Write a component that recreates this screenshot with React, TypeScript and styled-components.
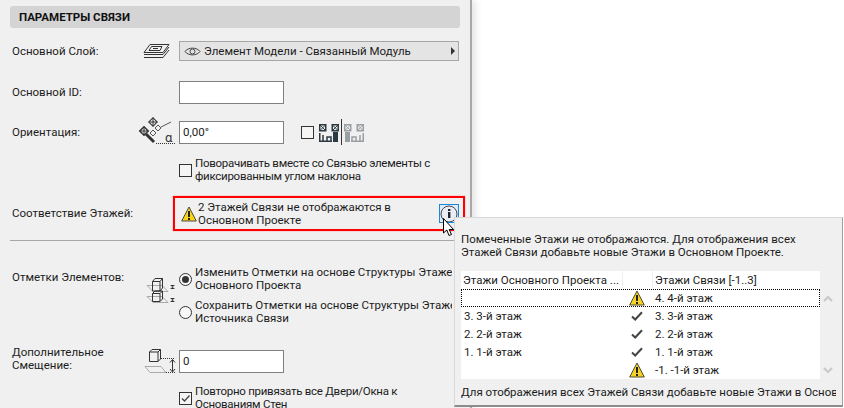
import React, { FC } from 'react';
import styled, { createGlobalStyle } from 'styled-components';

const GlobalStyle = createGlobalStyle`
    html, body {
        margin: 0;
        padding: 0;
        background: #fff;
        overflow: hidden;
    }
    body {
        font-family: Roboto, "Open Sans", sans-serif;
        font-size: 11.5px;
        line-height: 13px;
        color: #1c1c1c;
    }
`;

const Page = styled.div`
    position: relative;
    width: 844px;
    height: 408px;
    overflow: hidden;
    background: #fff;
`;

const SettingsPanel = styled.section`
    width: 470px;
    height: 408px;
    box-sizing: border-box;
    padding-top: 6px;
    background: #f0f0f0;
    box-shadow: 2px 0 0 #a8a8a8, 5px 0 8px rgba(0, 0, 0, 0.12);
    overflow: hidden;
`;

const SectionHeader = styled.h2`
    display: flex;
    align-items: center;
    width: 450px;
    height: 22px;
    margin: 0 0 0 10px;
    padding-left: 9px;
    box-sizing: border-box;
    background: #d4d4d4;
    border-radius: 3px;
    font-size: 11.5px;
    font-weight: 700;
    color: #111;
`;

const Row = styled.div<{ $top: number; $align?: string }>`
    display: grid;
    grid-template-columns: 125px 42px 1fr;
    align-items: ${(p) => p.$align || 'center'};
    margin-top: ${(p) => p.$top}px;
    padding-left: 12px;
`;

const Label = styled.div<{ $offset?: number }>`
    margin-top: ${(p) => p.$offset || 0}px;
    white-space: nowrap;
`;

const Icon = styled.svg`
    display: block;
    overflow: visible;
`;

const Dropdown = styled.div`
    display: flex;
    align-items: center;
    width: 280px;
    height: 20px;
    padding: 0 3px 0 4px;
    box-sizing: border-box;
    background: #e4e4e4;
    border: 1px solid #a6a6a6;
    gap: 3px;
`;

const DropdownArrow = styled.span`
    margin-left: auto;
    border-left: 4px solid #333;
    border-top: 4px solid transparent;
    border-bottom: 4px solid transparent;
`;

const TextField = styled.div<{ $top?: number }>`
    display: flex;
    align-items: center;
    width: 105px;
    height: 23px;
    margin-top: ${(p) => p.$top || 0}px;
    padding-left: 3px;
    box-sizing: border-box;
    background: #fff;
    border: 1px solid #808080;
`;

const InlineGroup = styled.div`
    display: flex;
    align-items: center;
`;

const Box = styled.span<{ $gap?: number }>`
    flex: none;
    display: block;
    width: 13px;
    height: 13px;
    box-sizing: border-box;
    margin-right: ${(p) => p.$gap ?? 3}px;
    background: #f5f5f5;
    border: 1px solid #333;
`;

const CheckRow = styled.div<{ $top: number; $after?: number }>`
    display: flex;
    align-items: center;
    width: 280px;
    margin: ${(p) => p.$top}px 0 ${(p) => p.$after || 0}px 179px;
    letter-spacing: -0.27px;
`;

const AlertBox = styled.div`
    display: flex;
    align-items: center;
    width: 292px;
    height: 35px;
    margin-left: -6px;
    padding: 0 4px 0 6px;
    box-sizing: border-box;
    border: 2px solid #f00;
    box-shadow: 0 0 1px #f66;
`;

const AlertText = styled.div`
    margin-left: 1px;
`;

const InfoButton = styled.div`
    position: relative;
    margin-left: auto;
    width: 20px;
    height: 19px;
    box-sizing: border-box;
    border: 1px solid #1e88d8;
    background: #dcebf7;
`;

const Divider = styled.hr`
    width: 450px;
    height: 1px;
    margin: 9px 0 0 10px;
    border: 0;
    background: #a8a8a8;
`;

const RadioList = styled.div`
    display: flex;
    flex-direction: column;
    gap: 7px;
    white-space: nowrap;
    width: 273px;
    overflow: hidden;
`;

const RadioRow = styled.div`
    display: flex;
    align-items: center;
`;

const Radio = styled.span<{ $on?: boolean }>`
    flex: none;
    display: flex;
    align-items: center;
    justify-content: center;
    width: 13px;
    height: 13px;
    margin-right: 3px;
    box-sizing: border-box;
    border: 1px solid #333;
    border-radius: 50%;
    background: #f8f8f8;

    &::after {
        content: '';
        display: ${(p) => (p.$on ? 'block' : 'none')};
        width: 7px;
        height: 7px;
        border-radius: 50%;
        background: #333;
    }
`;

const Popup = styled.aside`
    position: absolute;
    left: 454px;
    top: 217px;
    width: 389px;
    height: 190px;
    padding: 15px 0 0 6px;
    box-sizing: border-box;
    background: #f0f0f0;
    border: 1px solid #d8d8d8;
    border-right-color: #a0a0a0;
    border-bottom: 2px solid #8c8c8c;
`;

const TableArea = styled.div`
    display: flex;
    margin-top: 12px;
`;

const Table = styled.div`
    width: 359px;
    background: #fff;
`;

const TableRow = styled.div<{ $focus?: boolean }>`
    display: grid;
    grid-template-columns: 161px 30px 1fr;
    align-items: center;
    height: 18px;
    box-sizing: border-box;
    outline: ${(p) => (p.$focus ? '1px dotted #000' : 'none')};
    outline-offset: -1px;
`;

const HeadCell = styled.div<{ $line?: boolean }>`
    height: 18px;
    line-height: 18px;
    padding-left: 2px;
    border-left: ${(p) => (p.$line ? '1px solid #f0f0f0' : '0')};
    box-sizing: border-box;
    white-space: nowrap;
`;

const Cell = styled.div`
    padding-left: 3px;
`;

const MarkCell = styled.div`
    display: flex;
    justify-content: center;
`;

const ScrollColumn = styled.div`
    display: flex;
    flex-direction: column;
    justify-content: space-between;
    align-items: center;
    width: 15px;
    padding: 24px 0 5px;
    box-sizing: border-box;
`;

const PopupFooter = styled.div`
    width: 375px;
    margin-top: 7px;
    overflow: hidden;
    white-space: nowrap;
`;

const Cursor = styled.svg`
    position: absolute;
    left: 443px;
    top: 218px;
`;

const WarningIcon: FC = () => (
    <Icon width="16" height="16" viewBox="0 0 16 16">
        <path d="M8 1 L15.3 15 H0.7 Z" fill="#f7d21e" stroke="#4a4a3a" strokeWidth="1" strokeLinejoin="round" />
        <rect x="7" y="5" width="2" height="6" fill="#222" />
        <rect x="7" y="12" width="2" height="2" fill="#222" />
    </Icon>
);

const CheckIcon: FC = () => (
    <Icon width="12" height="10" viewBox="0 0 12 10">
        <path d="M1 5.5 L4.2 8.5 L11 1.2" fill="none" stroke="#444" strokeWidth="2" />
    </Icon>
);

const Chevron: FC<{ $down?: boolean }> = ({ $down }) => (
    <svg width="10" height="7" viewBox="0 0 10 7">
        <path d={$down ? 'M1 1 L5 5 L9 1' : 'M1 6 L5 2 L9 6'} fill="none" stroke="#c8c8c8" strokeWidth="2" />
    </svg>
);

const EyeIcon: FC = () => (
    <Icon width="17" height="11" viewBox="0 0 17 11">
        <path d="M1 5.5 C4 1 13 1 16 5.5 C13 10 4 10 1 5.5 Z" fill="none" stroke="#444" strokeWidth="1" />
        <circle cx="8.5" cy="5.5" r="2.5" fill="none" stroke="#444" strokeWidth="1" />
    </Icon>
);

const LayerIcon: FC = () => (
    <Icon width="42" height="20" viewBox="137 41 42 20">
        <g fill="none" stroke="#333" strokeWidth="1">
            <path d="M150 44.5 H169 L163 52.5 H144 Z" />
            <path d="M151.5 46.5 H162 L160 50.5 H149 Z" />
            <path d="M153 48.5 H158" />
            <path d="M144 54.5 H163 L169 47" />
            <path d="M144 57.5 H163 L169 50" />
        </g>
    </Icon>
);

const XBox: FC<{ x: number; y: number; c: string; size?: number; w?: number }> = ({ x, y, c, size = 6, w = 1 }) => (
    <g fill="none" stroke={c} strokeWidth={w}>
        <rect x={x} y={y} width={size} height={size} />
        <path d={`M${x} ${y} L${x + size} ${y + size} M${x + size} ${y} L${x} ${y + size}`} strokeWidth="1" />
    </g>
);

const OrientationIcon: FC = () => (
    <Icon width="42" height="23" viewBox="137 121 42 23">
        <g transform="rotate(45 153 122)">
            <XBox x={150} y={119} c="#333" />
        </g>
        <g transform="rotate(45 144 131)">
            <XBox x={141} y={128} c="#333" w={1.5} />
        </g>
        <path d="M146 134 L154 142" stroke="#333" strokeWidth="3" />
        <g fill="none" stroke="#555" strokeWidth="1">
            <path d="M150 133 L153 130 L156 133 L153 136 Z" />
            <path d="M155 128 L158 125 L161 128 L158 131 Z" />
            <path d="M161 127 L171 122" />
            <path d="M156 143.5 H175" strokeDasharray="1 1" stroke="#333" />
        </g>
        <text x="165" y="142" fontSize="13" fill="#333">α</text>
    </Icon>
);

const PlacementIcon: FC<{ c: string; flip?: boolean }> = ({ c, flip }) => (
    <svg width="20" height="18" viewBox="0 0 20 18">
        <g transform={flip ? 'translate(20 0) scale(-1 1)' : undefined}>
            <XBox x={0.75} y={0.75} c={c} w={1.5} />
            <XBox x={13.25} y={0.75} c={c} w={1.5} />
            <path d="M0.75 9 V17.25 H13 M4 17.25 V11 M8 17.25 V13 H12 V17.25" fill="none" stroke={c} strokeWidth="1.5" />
            <rect x="14" y="8" width="5" height="10" fill={c} />
        </g>
    </svg>
);

const PlacementSeparator = styled.span`
    width: 1px;
    height: 26px;
    margin: -2px 2px -1px;
    background: #333;
`;

const PlacementCheck = styled(Box)`
    margin: 0 5px 0 17px;
`;

const ElevationIcon: FC = () => (
    <Icon width="42" height="59" viewBox="137 266 42 59">
        <g fill="none" stroke="#aaa" strokeWidth="1">
            <path d="M152 285.5 H162 L168 291.5 H153 L147 285.5 Z" />
            <path d="M152 296.5 H162 L168 302.5 H153 L147 296.5 Z" />
        </g>
        <g fill="none" stroke="#333" strokeWidth="1">
            <path d="M152.5 281.5 L155 278.5 H162.5 V288 L160 291 H152.5 Z M152.5 281.5 H160 V291 M160 281.5 L162.5 278.5" />
            <path d="M152.5 293.5 L155 291 H162.5 V299 L160 301.5 H152.5 Z M152.5 293.5 H160 V301.5 M160 293.5 L162.5 291" />
        </g>
        <path d="M170 285 H175 L172.5 287 L175 289 H170 L172.5 287 Z" fill="#333" />
        <path d="M170 298 H175 L172.5 300 L175 302 H170 L172.5 300 Z" fill="#333" />
    </Icon>
);

const OffsetIcon: FC = () => (
    <Icon width="42" height="27" viewBox="137 346 42 27">
        <path d="M150 366.5 H161 L166 372.5 H150 L145 366.5 Z" fill="none" stroke="#aaa" strokeWidth="1" />
        <path d="M149.5 352 L152 349.5 H160.5 V359 L158 361.5 H149.5 Z M149.5 352 H158 V361.5 M158 352 L160.5 349.5" fill="none" stroke="#333" strokeWidth="1" />
        <path d="M161 358.5 H175" stroke="#333" strokeDasharray="1 1" />
        <path d="M166 372.5 H175" stroke="#333" strokeDasharray="1 1" />
        <path d="M172.5 360 V371 M170 362.5 L172.5 359.5 L175 362.5 M170 369 L172.5 372 L175 369" fill="none" stroke="#333" strokeWidth="1" />
    </Icon>
);

const storeys = [
    { id: 4, base: '', link: '4. 4-й этаж', ok: false, focus: true },
    { id: 3, base: '3. 3-й этаж', link: '3. 3-й этаж', ok: true, focus: false },
    { id: 2, base: '2. 2-й этаж', link: '2. 2-й этаж', ok: true, focus: false },
    { id: 1, base: '1. 1-й этаж', link: '1. 1-й этаж', ok: true, focus: false },
    { id: -1, base: '', link: '-1. -1-й этаж', ok: false, focus: false },
];

export default function App() {
    return (
        <Page>
            <GlobalStyle />
            <SettingsPanel>
                <SectionHeader>ПАРАМЕТРЫ СВЯЗИ</SectionHeader>
                <Row $top={13}>
                    <Label>Основной Слой:</Label>
                    <LayerIcon />
                    <Dropdown>
                        <EyeIcon />
                        Элемент Модели - Связанный Модуль
                        <DropdownArrow />
                    </Dropdown>
                </Row>
                <Row $top={20}>
                    <Label>Основной ID:</Label>
                    <span />
                    <TextField />
                </Row>
                <Row $top={17}>
                    <Label>Ориентация:</Label>
                    <OrientationIcon />
                    <InlineGroup>
                        <TextField>0,00°</TextField>
                        <PlacementCheck />
                        <PlacementIcon c="#2b3a42" />
                        <PlacementSeparator />
                        <PlacementIcon c="#9a9fa3" flip />
                    </InlineGroup>
                </Row>
                <CheckRow $top={13}>
                    <Box />
                    <div>
                        Поворачивать вместе со Связью элементы с
                        <br />
                        фиксированным углом наклона
                    </div>
                </CheckRow>
                <Row $top={13}>
                    <Label>Соответствие Этажей:</Label>
                    <span />
                    <AlertBox>
                        <WarningIcon />
                        <AlertText>
                            2 Этажей Связи не отображаются в
                            <br />
                            Основном Проекте
                        </AlertText>
                        <InfoButton>
                            <svg width="18" height="17" viewBox="0 0 18 17">
                                <circle cx="9" cy="9" r="8" fill="#e8eef2" stroke="#445" strokeWidth="1" />
                                <rect x="8" y="7" width="2.4" height="6" fill="#223" />
                                <rect x="8" y="4" width="2.4" height="2" fill="#223" />
                            </svg>
                        </InfoButton>
                    </AlertBox>
                </Row>
                <Divider />
                <Row $top={25} $align="start">
                    <Label $offset={5}>Отметки Элементов:</Label>
                    <ElevationIcon />
                    <RadioList>
                        <RadioRow>
                            <Radio $on />
                            <div>
                                Изменить Отметки на основе Структуры Этажей
                                <br />
                                Основного Проекта
                            </div>
                        </RadioRow>
                        <RadioRow>
                            <Radio />
                            <div>
                                Сохранить Отметки на основе Структуры Этажей
                                <br />
                                Источника Связи
                            </div>
                        </RadioRow>
                    </RadioList>
                </Row>
                <Row $top={21} $align="start">
                    <Label>
                        Дополнительное
                        <br />
                        Смещение:
                    </Label>
                    <OffsetIcon />
                    <TextField $top={4}>0</TextField>
                </Row>
                <CheckRow $top={12}>
                    <Box>
                        <svg width="11" height="11" viewBox="0 0 11 11" style={{ display: 'block' }}>
                            <path d="M2 5.5 L4.5 8 L9.5 2.5" fill="none" stroke="#444" strokeWidth="1.3" />
                        </svg>
                    </Box>
                    <div>
                        Повторно привязать все Двери/Окна к
                        <br />
                        Основаниям Стен
                    </div>
                </CheckRow>
            </SettingsPanel>

            <Popup>
                <div>
                    Помеченные Этажи не отображаются. Для отображения всех
                    <br />
                    Этажей Связи добавьте новые Этажи в Основном Проекте.
                </div>
                <TableArea>
                    <Table>
                        <TableRow>
                            <HeadCell>Этажи Основного Проекта ...</HeadCell>
                            <HeadCell $line />
                            <HeadCell $line>Этажи Связи [-1..3]</HeadCell>
                        </TableRow>
                        {storeys.map((s) => (
                            <TableRow key={s.id} $focus={s.focus}>
                                <Cell>{s.base}</Cell>
                                <MarkCell>{s.ok ? <CheckIcon /> : <WarningIcon />}</MarkCell>
                                <Cell>{s.link}</Cell>
                            </TableRow>
                        ))}
                    </Table>
                    <ScrollColumn>
                        <Chevron />
                        <Chevron $down />
                    </ScrollColumn>
                </TableArea>
                <PopupFooter>
                    Для отображения всех Этажей Связи добавьте новые Этажи в Основном Проекте.
                </PopupFooter>
            </Popup>

            <Cursor width="12" height="19" viewBox="0 0 12 19">
                <path d="M0.5 0.5 V15 L3.8 12 L6 17.5 L8.5 16.5 L6.2 11.5 H10.5 Z" fill="#fff" stroke="#000" strokeWidth="1" />
            </Cursor>
        </Page>
    );
}
